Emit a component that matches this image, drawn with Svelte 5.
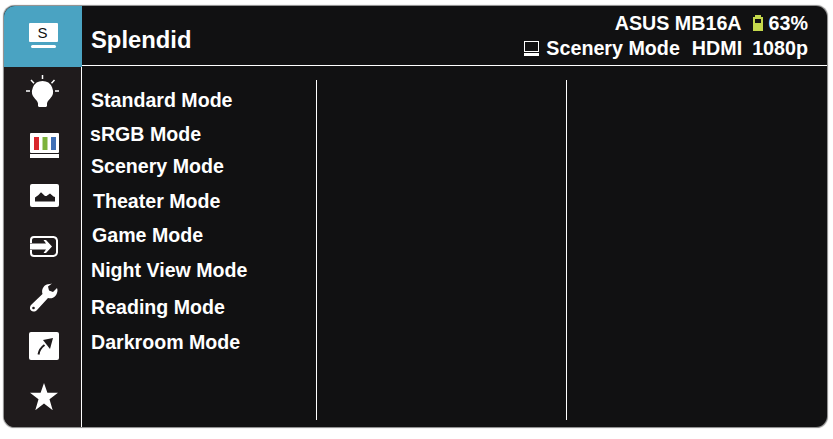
<script lang="ts">
  // gap = space above each row, rows are 32px tall
  const modes = [
    { label: 'Standard Mode', indent: 9, gap: 0 },
    { label: 'sRGB Mode', indent: 8, gap: 2 },
    { label: 'Scenery Mode', indent: 9, gap: 0 },
    { label: 'Theater Mode', indent: 11, gap: 3 },
    { label: 'Game Mode', indent: 10, gap: 2 },
    { label: 'Night View Mode', indent: 9, gap: 3 },
    { label: 'Reading Mode', indent: 9, gap: 5 },
    { label: 'Darkroom Mode', indent: 9, gap: 3 }
  ];
</script>

<div class="page">
  <div class="osd">
    <aside class="sidebar">
      <div class="tab active">
        <svg width="78" height="61" viewBox="4 6 78 61">
          <rect x="29" y="23" width="29" height="19" rx="1" fill="#fff" />
          <rect x="31" y="45" width="25" height="3" rx="1.500" fill="#fff" />
          <text x="42.500" y="38" class="s-letter">S</text>
        </svg>
      </div>
      <div class="tab">
        <svg width="77" height="51" viewBox="4 67 77 51">
          <path d="M42.500 81a10.500 10.500 0 0 0-7.500 17.800c1.600 1.700 2.700 3 3 4.700v2c0 .9.600 1.500 1.500 1.500h6c.9 0 1.500-.6 1.500-1.500v-2c.3-1.700 1.400-3 3-4.700a10.500 10.500 0 0 0-7.500-17.800z" fill="#fff" />
          <path d="M42.500 75v4M31 80l3 3.200M54.500 80l-3 3.200M26 91h4M55 91h4" stroke="#fff" stroke-width="1.500" fill="none" />
        </svg>
      </div>
      <div class="tab">
        <svg width="77" height="51" viewBox="4 118 77 51">
          <rect x="30" y="133" width="29" height="20" rx="1" fill="#fff" />
          <rect x="34" y="137" width="5" height="13" fill="#d9262c" />
          <rect x="42.500" y="137" width="5" height="13" fill="#7cb23a" />
          <rect x="51" y="137" width="5" height="13" fill="#3f6fb5" />
          <rect x="30" y="154" width="29" height="4" fill="#fff" />
        </svg>
      </div>
      <div class="tab">
        <svg width="77" height="51" viewBox="4 169 77 51">
          <rect x="30" y="184" width="29" height="23" rx="2" fill="#fff" />
          <path d="M35 201.500v-4l3.500-2.500 2.500-2.800 4 3.800 1.500 0 3.500-2.500 3.500 3 1.500.5v4.500z" fill="#1f1b1c" />
        </svg>
      </div>
      <div class="tab">
        <svg width="77" height="51" viewBox="4 220 77 51">
          <path d="M31 243v-3a3 3 0 0 1 3-3h19.500a4 4 0 0 1 3.500 3.500v12a4 4 0 0 1-3.500 3.500H34a3 3 0 0 1-3-3v-3" fill="none" stroke="#fff" stroke-width="2" />
          <path d="M30 243.500h16l-2.500-3.500h2.500l6 6.500-6 6.500h-2.500l2.500-3.500H30z" fill="#fff" />
        </svg>
      </div>
      <div class="tab">
        <svg width="77" height="51" viewBox="4 271 77 51">
          <path d="M50 284C44 284 41 289 42.500 294L31 305C29 308 30 311 33.500 311.500 35 311.500 36 311 37 310L48 298C53 299.500 57.500 295.500 57.500 290L57 288 53 292 49 290.500 48 286.500 52 283.500z" fill="#fff" />
          <circle cx="33.500" cy="308" r="1.300" fill="#1f1b1c" />
        </svg>
      </div>
      <div class="tab">
        <svg width="77" height="51" viewBox="4 322 77 51">
          <rect x="29" y="332" width="30" height="28" rx="2" fill="#fff" />
          <path d="M38.500 354.500c.5-3.500 2.500-7 6-9.500" fill="none" stroke="#1f1b1c" stroke-width="2" />
          <path d="M43 340l10-2-3 11z" fill="#1f1b1c" />
        </svg>
      </div>
      <div class="tab">
        <svg width="77" height="51" viewBox="4 373 77 51">
          <path d="M44 383l3.400 9.800H58l-8.500 6.400 3.200 11-8.700-6.600-8.700 6.600 3.200-11L30 392.800h10.600z" fill="#fff" />
        </svg>
      </div>
    </aside>

    <main class="content">
      <header class="header">
        <div class="title">Splendid</div>
        <div class="status">
          <div class="status-row">
            <span>ASUS MB16A</span>
            <span class="battery"><i></i></span>
            <span>63%</span>
          </div>
          <div class="status-row">
            <svg class="mini" width="15" height="15" viewBox="0 0 15 15">
              <rect x="0.500" y="0.500" width="14" height="10" fill="none" stroke="#fff" />
              <rect x="0" y="12" width="15" height="3" fill="#fff" />
            </svg>
            <span>Scenery Mode</span>
            <span class="hdmi">HDMI</span>
            <span class="res">1080p</span>
          </div>
        </div>
      </header>

      <div class="columns">
        <ul class="col first">
          {#each modes as m}
            <li style="padding-left: {m.indent}px; margin-top: {m.gap}px">{m.label}</li>
          {/each}
        </ul>
        <div class="col second"></div>
        <div class="col third"></div>
      </div>
    </main>
  </div>
</div>

<style>
  :global(body) {
    margin: 0;
    background: #fff;
  }

  .page {
    width: 833px;
    height: 439px;
    box-sizing: border-box;
    padding: 6px 6px 12px 4px;
    font-family: "Liberation Sans", Arial, sans-serif;
    color: #fff;
  }

  .osd {
    display: flex;
    height: 100%;
    background: #111112;
    border-radius: 11px;
    overflow: hidden;
    box-shadow: 0 0 1px 0.5px #888;
  }

  .sidebar {
    width: 77px;
    flex: none;
    background: #1f1b1c;
    display: flex;
    flex-direction: column;
  }

  .tab {
    height: 51px;
    flex: none;
  }

  .tab svg {
    display: block;
  }

  .tab.active {
    height: 61px;
    width: 78px;
    background: #4aa3c2;
    position: relative;
  }

  .s-letter {
    font-family: "Liberation Sans", Arial, sans-serif;
    font-size: 15px;
    fill: #111;
    text-anchor: middle;
  }

  .content {
    flex: 1;
    display: flex;
    flex-direction: column;
    border-left: 1px solid #fff;
    min-width: 0;
  }

  .header {
    height: 60px;
    box-sizing: border-box;
    flex: none;
    display: flex;
    justify-content: space-between;
    align-items: center;
    border-bottom: 1px solid #fff;
    padding: 0 19px 0 9px;
    font-weight: 700;
  }

  .title {
    font-size: 23.800px;
    padding-top: 8px;
  }

  .status {
    display: flex;
    flex-direction: column;
    align-items: flex-end;
    font-size: 19.700px;
    line-height: 25px;
  }

  .status-row {
    display: flex;
    align-items: center;
  }

  .battery {
    width: 10px;
    height: 14px;
    margin: 2px 6px 0 11px;
    background: #c4d84c;
    position: relative;
    box-sizing: border-box;
    padding-top: 2px;
  }

  .battery::before {
    content: "";
    position: absolute;
    top: -2px;
    left: 2px;
    width: 6px;
    height: 2px;
    background: #c4d84c;
  }

  .battery i {
    display: block;
    height: 4px;
    margin: 0 2px;
    background: #111112;
  }

  .mini {
    margin-right: 7px;
  }

  .hdmi {
    margin-left: 12px;
  }

  .res {
    margin-left: 10px;
  }

  .columns {
    flex: 1;
    display: flex;
    padding: 14px 0 7px;
    min-height: 0;
  }

  .col {
    margin: 0;
    list-style: none;
    box-sizing: border-box;
  }

  .first {
    width: 235px;
    padding: 4px 0 0;
    border-right: 1px solid #fff;
    font-size: 19.600px;
    font-weight: 700;
  }

  .first li {
    height: 32px;
    display: flex;
    align-items: center;
    white-space: nowrap;
  }

  .second {
    width: 250px;
    border-right: 1px solid #fff;
  }

  .third {
    flex: 1;
  }
</style>
